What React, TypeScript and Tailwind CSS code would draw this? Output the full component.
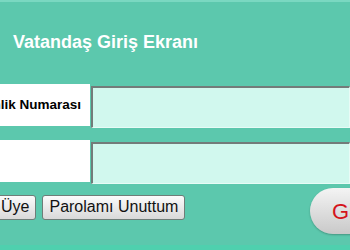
import React from 'react';

const btn =
  'h-[25px] px-[6px] rounded-[3px] border border-[#6f7d78] bg-gradient-to-b from-[#fbfbfb] to-[#d9d9d9] text-[16px] leading-none text-[#111]';

export default function App() {
  return (
    <div
      className="w-[350px] h-[250px] overflow-hidden bg-[#5cc8ad] flex flex-col"
      style={{ fontFamily: '"Liberation Sans", Arial, sans-serif' }}
    >
      <div className="h-[2px] bg-[#7ad8c1]" />
      <div className="h-[82px] flex items-center pl-[13px] pb-[2px]">
        <h1 className="text-white font-bold text-[18px]">Vatandaş Giriş Ekranı</h1>
      </div>

      {/* Kimlik satırı */}
      <div className="flex h-[42px] gap-[1px]">
        <div className="w-[90px] bg-white flex items-center justify-end pr-[9px] overflow-hidden">
          <span className="whitespace-nowrap text-[13.5px] font-bold text-black">Kimlik Numarası</span>
        </div>
        <div className="flex-1 mt-[2px] h-[42px] border-t-2 border-l-2 border-t-[#737b79] border-l-[#737b79] border-b border-r border-b-[#e8fbf6] border-r-[#e8fbf6] bg-[#d1f8ee]" />
      </div>

      <div className="h-[14px]" />

      {/* Parola satırı */}
      <div className="flex h-[42px] gap-[1px]">
        <div className="w-[90px] bg-white" />
        <div className="flex-1 mt-[2px] h-[42px] border-t-2 border-l-2 border-t-[#737b79] border-l-[#737b79] border-b border-r border-b-[#e8fbf6] border-r-[#e8fbf6] bg-[#d1f8ee]" />
      </div>

      <div className="flex items-center justify-between mt-[6px]">
        <div className="flex items-center gap-[6px] -mt-[8px]">
          <button className={`${btn} -ml-[6px] pl-[6px]`}>Üye</button>
          <button className={btn}>Parolamı Unuttum</button>
        </div>
        <button className="-mr-[50px] w-[90px] h-[46px] rounded-full bg-gradient-to-b from-[#f4f4f4] to-[#c9c9c9] shadow-[0_1px_2px_rgba(0,0,0,0.25)] text-left pl-[22px] text-[22px] text-[#d4141c]">
          Giriş
        </button>
      </div>

      <div className="flex-1" />
      <div className="h-[5px] bg-[#4fd0ae]" />
    </div>
  );
}
